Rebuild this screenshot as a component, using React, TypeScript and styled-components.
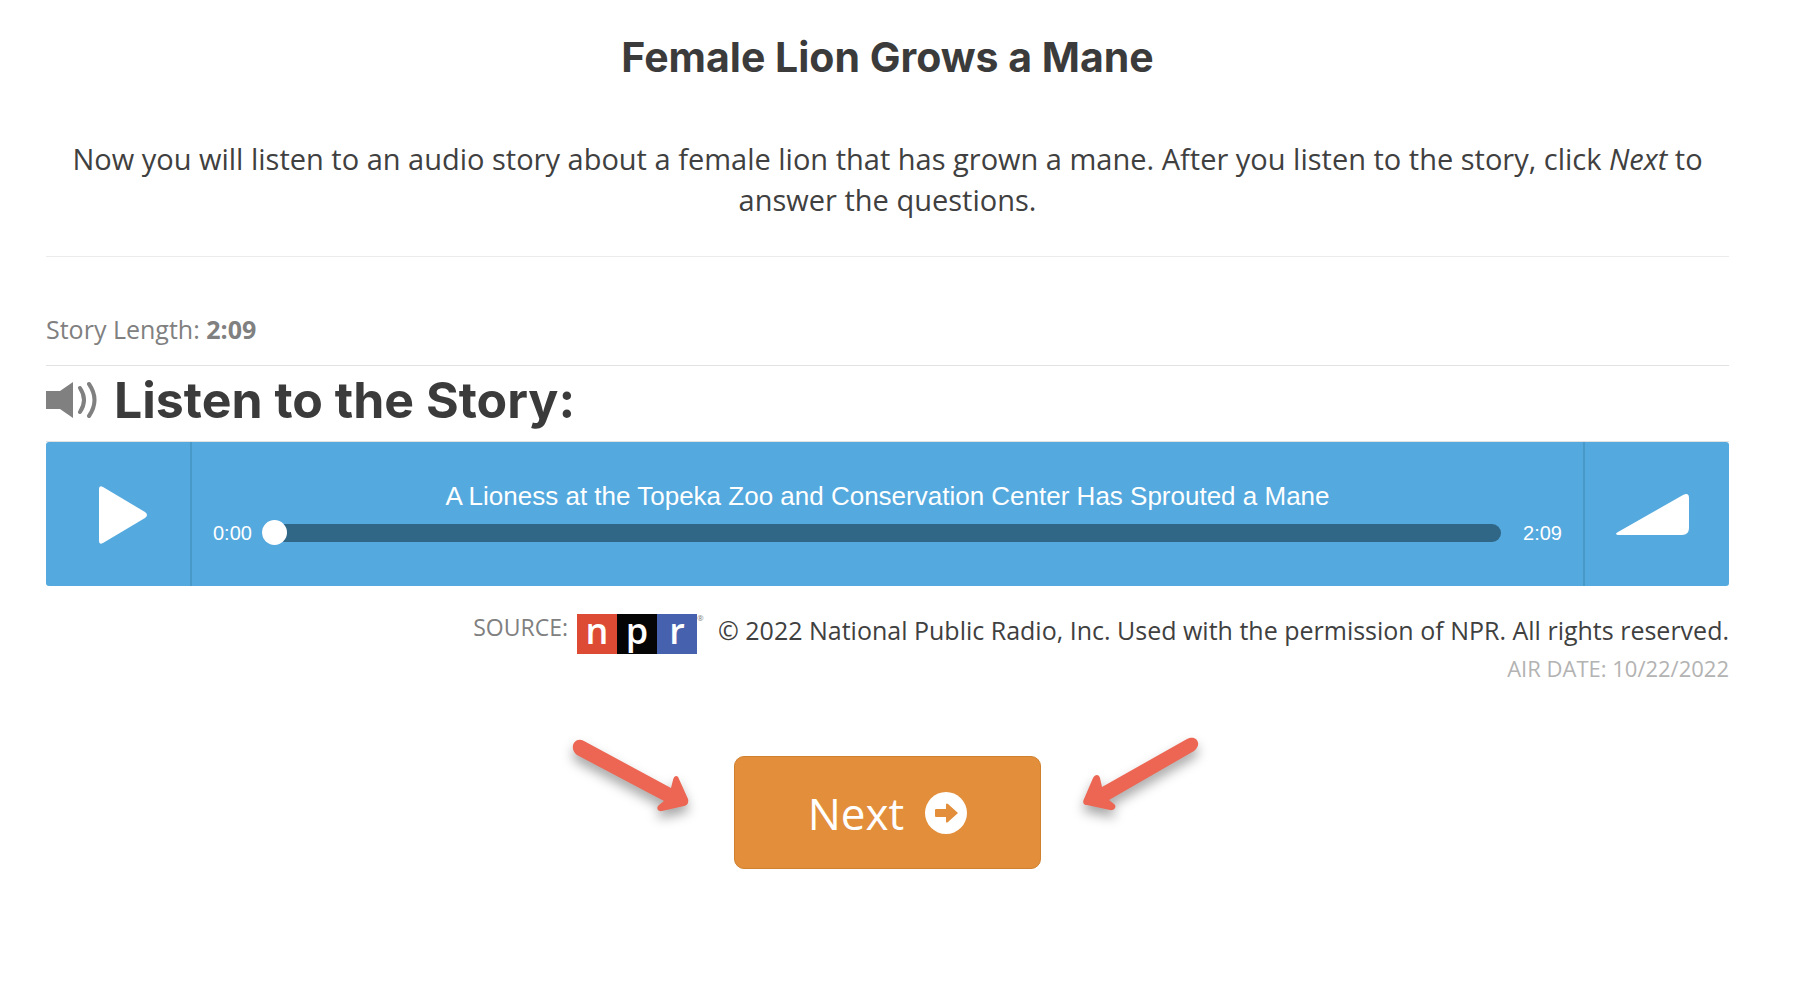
import React from 'react';
import styled, { createGlobalStyle } from 'styled-components';

const GlobalStyle = createGlobalStyle`
  *, *::before, *::after { box-sizing: border-box; }
  body {
    margin: 0;
    background: #fff;
    color: #404040;
    font-family: "Open Sans", sans-serif;
  }
  h1, h2, p { margin: 0; }
  button { font-family: inherit; cursor: pointer; }
`;

const Page = styled.main`
  padding: 31px 77px 112px 46px;
`;

const Intro = styled.header`
  padding-bottom: 36px;
  border-bottom: 1px solid #ebebeb;
  text-align: center;
`;

const Title = styled.h1`
  color: #3b3b3b;
  font-family: Inter, sans-serif;
  font-size: 41px;
  font-weight: 700;
  line-height: 52px;
`;

const Lead = styled.p`
  padding: 55px 24px 0;
  font-size: 29px;
  line-height: 41px;
`;

const StoryLength = styled.p`
  padding: 55px 0 18px;
  border-bottom: 1px solid #e2e2e2;
  color: #808080;
  font-size: 25px;
  line-height: 35px;
`;

const ListenHeading = styled.h2`
  display: flex;
  align-items: center;
  gap: 17px;
  height: 76px;
  padding-bottom: 7px;
  border-bottom: 1px solid #e2e2e2;
  color: #3b3b3b;
  font-family: Inter, sans-serif;
  font-size: 50px;
  font-weight: 700;
  line-height: 60px;
`;

const Player = styled.section`
  display: flex;
  height: 144px;
  border-radius: 3px;
  background: #54a9de;
  color: #fff;
  font-family: "Liberation Sans", Arial, sans-serif;
`;

const PlayerButton = styled.button<{ $side: 'left' | 'right' }>`
  display: flex;
  align-items: center;
  justify-content: center;
  flex: none;
  width: 146px;
  padding: ${(p) => (p.$side === 'left' ? '2px 0 0 10px' : '0 10px 0 0')};
  border: 0 solid #4898c8;
  border-right-width: ${(p) => (p.$side === 'left' ? 2 : 0)}px;
  border-left-width: ${(p) => (p.$side === 'right' ? 2 : 0)}px;
  background: none;
`;

const Scrubber = styled.div`
  flex: 1;
  min-width: 0;
  padding: 38px 21px 0;
`;

const TrackTitle = styled.p`
  font-size: 26px;
  line-height: 32px;
  text-align: center;
`;

const SeekRow = styled.div`
  display: flex;
  align-items: center;
  gap: 9px;
  height: 42px;
`;

const Time = styled.span<{ $end?: boolean }>`
  width: ${(p) => (p.$end ? 52 : 40)}px;
  font-size: 20px;
  line-height: 24px;
  text-align: ${(p) => (p.$end ? 'right' : 'left')};
`;

const Seek = styled.input`
  flex: 1;
  min-width: 0;
  height: 26px;
  margin: 0;
  appearance: none;
  background: none;
  cursor: pointer;

  &::-webkit-slider-runnable-track {
    height: 18px;
    border-radius: 9px;
    background: #306686;
  }
  &::-webkit-slider-thumb {
    width: 25px;
    height: 25px;
    margin-top: -4px;
    border-radius: 50%;
    appearance: none;
    background: #fff;
  }
`;

const Credits = styled.footer`
  padding-top: 28px;
`;

const SourceRow = styled.div`
  display: flex;
  align-items: flex-start;
  justify-content: flex-end;
`;

const SourceLabel = styled.span`
  margin-right: 9px;
  color: #808080;
  font-size: 23px;
  line-height: 27px;
`;

const Logo = styled.span`
  display: flex;
  margin-right: 16px;
`;

const LogoTile = styled.span<{ $color: string }>`
  width: 40px;
  height: 40px;
  background: ${(p) => p.$color};
  color: #fff;
  font-size: 36px;
  font-weight: 600;
  line-height: 34px;
  text-align: center;
`;

const LogoMark = styled.span`
  width: 5px;
  color: #808080;
  font-size: 8px;
  line-height: 8px;
`;

const Copyright = styled.p`
  font-size: 25px;
  line-height: 33px;
`;

const AirDate = styled.p`
  color: #b3b3b3;
  font-size: 22px;
  line-height: 28px;
  text-align: right;
`;

const Actions = styled.div`
  display: flex;
  justify-content: center;
  gap: 44px;
  padding-top: 55px;
`;

const NextButton = styled.button`
  display: flex;
  align-items: center;
  justify-content: center;
  gap: 21px;
  width: 307px;
  height: 113px;
  margin-top: 19px;
  padding: 0;
  border: 1px solid #d0812f;
  border-radius: 10px;
  background: #e28e3b;
  color: #fff;
  font-size: 44px;
  line-height: 60px;
`;

const Pointer = styled.svg`
  flex: none;
  width: 117px;
  height: 80px;
  overflow: visible;
  fill: #ec6653;
  filter: drop-shadow(0 7px 6px rgba(0, 0, 0, 0.35));
`;

export default function App() {
  return (
    <>
      <GlobalStyle />
      <Page>
        <Intro>
          <Title>Female Lion Grows a Mane</Title>
          <Lead>
            Now you will listen to an audio story about a female lion that has grown a mane. After you listen to the
            story, click <em>Next</em> to answer the questions.
          </Lead>
        </Intro>

        <StoryLength>
          Story Length: <strong>2:09</strong>
        </StoryLength>
        <ListenHeading>
          <svg width="51" height="38" viewBox="0 0 51 38" aria-hidden="true">
            <path d="M0 10H14L27 1V37L14 28H0Z" fill="#808080" />
            <path d="M34 7Q42 19 34 31M43 3Q54 19 43 35" fill="none" stroke="#808080" strokeWidth="4" strokeLinecap="round" />
          </svg>
          Listen to the Story:
        </ListenHeading>

        <Player aria-label="Audio player">
          <PlayerButton $side="left" type="button" aria-label="Play">
            <svg width="50" height="60" viewBox="0 0 50 60" aria-hidden="true">
              <path d="M1 4Q1 0 5 2L47 27Q51 30 47 33L5 58Q1 60 1 56Z" fill="#fff" />
            </svg>
          </PlayerButton>
          <Scrubber>
            <TrackTitle>A Lioness at the Topeka Zoo and Conservation Center Has Sprouted a Mane</TrackTitle>
            <SeekRow>
              <Time>0:00</Time>
              <Seek type="range" min="0" max="129" defaultValue="0" aria-label="Seek" />
              <Time $end>2:09</Time>
            </SeekRow>
          </Scrubber>
          <PlayerButton $side="right" type="button" aria-label="Volume">
            <svg width="73" height="41" viewBox="0 0 73 41" aria-hidden="true">
              <path d="M2 38L67 1Q73-2 73 4V34Q73 41 66 41H2Q-2 40 2 38Z" fill="#fff" />
            </svg>
          </PlayerButton>
        </Player>

        <Credits>
          <SourceRow>
            <SourceLabel>SOURCE:</SourceLabel>
            <Logo>
              <LogoTile $color="#de4b35">n</LogoTile>
              <LogoTile $color="#050505">p</LogoTile>
              <LogoTile $color="#4662ae">r</LogoTile>
              <LogoMark>®</LogoMark>
            </Logo>
            <Copyright>© 2022 National Public Radio, Inc. Used with the permission of NPR. All rights reserved.</Copyright>
          </SourceRow>
          <AirDate>AIR DATE: 10/22/2022</AirDate>
        </Credits>

        <Actions>
          <Pointer viewBox="1 0 117 80" aria-hidden="true">
            <path d="M12 4L99 51L101 43C102 38 106 38 107 42L116 62C117 66 115 69 112 69L90 74C85 75 84 70 87 68L92 64L5 18C-4 11 3-1 12 4Z" />
          </Pointer>
          <NextButton type="button">
            Next
            <svg width="42" height="42" viewBox="0 0 42 42" aria-hidden="true">
              <circle cx="21" cy="21" r="21" fill="#fff" />
              <path d="M11 17H21V12Q22 11 23 12L33 21L23 30Q22 31 21 30V25H11Q10 25 10 24V18Q10 17 11 17Z" fill="#e28e3b" />
            </svg>
          </NextButton>
          <Pointer viewBox="2 0 117 80" aria-hidden="true">
            <path d="M104 2L19 50L17 41C16 37 12 37 10 41L1 62C-1 66 1 68 4 68L27 73C32 74 34 69 31 67L26 63L111 14C120 7 113-3 104 2Z" />
          </Pointer>
        </Actions>
      </Page>
    </>
  );
}
